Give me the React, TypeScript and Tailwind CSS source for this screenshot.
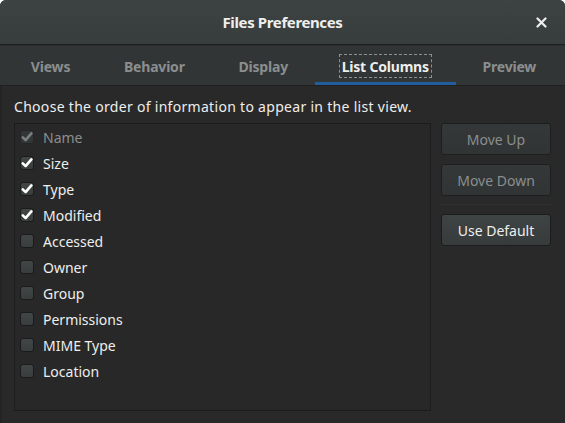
import { useState } from "react";

type Column = {
  name: string;
  checked: boolean;
  locked?: boolean;
};

const tabs = ["Views", "Behavior", "Display", "List Columns", "Preview"];

const initialColumns: Column[] = [
  { name: "Name", checked: true, locked: true },
  { name: "Size", checked: true },
  { name: "Type", checked: true },
  { name: "Modified", checked: true },
  { name: "Accessed", checked: false },
  { name: "Owner", checked: false },
  { name: "Group", checked: false },
  { name: "Permissions", checked: false },
  { name: "MIME Type", checked: false },
  { name: "Location", checked: false },
];

function Check({ checked, locked }: { checked: boolean; locked?: boolean }) {
  return (
    <span
      className={`flex items-center justify-center w-[14px] h-[14px] rounded-[3px] border shrink-0 ${
        locked
          ? "border-[#242626] bg-[#333636]"
          : "border-[#1a1b1b] bg-gradient-to-b from-[#434646] to-[#3a3d3d]"
      }`}
    >
      {checked && (
        <svg width="12" height="12" viewBox="0 0 12 12">
          <path
            d="M1.8 6.4 L4.6 9.2 L10.4 2.4"
            fill="none"
            stroke={locked ? "#7c7f80" : "#ffffff"}
            strokeWidth="2.6"
            strokeLinecap="round"
            strokeLinejoin="round"
          />
        </svg>
      )}
    </span>
  );
}

export default function App() {
  const [columns, setColumns] = useState(initialColumns);
  const active = "List Columns";

  function toggle(index: number) {
    setColumns((cols) =>
      cols.map((c, i) => (i === index && !c.locked ? { ...c, checked: !c.checked } : c))
    );
  }

  return (
    <div
      className="w-[565px] h-[423px] flex flex-col bg-[#292929] text-[#eeeeec] overflow-hidden rounded-t-[6px]"
      style={{ fontFamily: '"Noto Sans", "Open Sans", sans-serif' }}
    >
      {/* header bar */}
      <div className="relative h-[45px] flex items-center justify-center bg-gradient-to-b from-[#3d4343] to-[#373c3c] border-b border-[#1b1f1f] shrink-0">
        <h1 className="text-[15px] font-bold tracking-tight">Files Preferences</h1>
        <button className="absolute right-[14px] top-[12px] w-[20px] h-[20px] flex items-center justify-center">
          <svg width="11" height="11" viewBox="0 0 11 11">
            <path d="M1.5 1.5 L9.5 9.5 M9.5 1.5 L1.5 9.5" stroke="#eeeeec" strokeWidth="2.2" strokeLinecap="round" />
          </svg>
        </button>
      </div>

      {/* tabs */}
      <div className="h-[41px] flex items-stretch pl-[4px] pr-[2px] bg-[#313535] border-t border-[#2b2f2f] border-b border-b-[#1f2121] shrink-0">
        {tabs.map((tab) => (
          <div
            key={tab}
            className={`flex-auto flex items-center justify-center pt-[3px] border-b-[3px] ${
              tab === active ? "border-[#215d9c]" : "border-transparent"
            }`}
          >
            <span
              className={`text-[14px] font-bold px-[2px] pt-[1px] tracking-[-0.2px] ${
                tab === active
                  ? "text-[#eeeeec] border border-dashed border-[#8d9192]"
                  : "text-[#8b8e8f] border border-transparent"
              }`}
            >
              {tab}
            </span>
          </div>
        ))}
      </div>

      {/* content */}
      <div className="flex-1 flex flex-col px-[14px] pt-[11px] pb-[12px] border-l-[2px] border-[#242424]">
        <p className="text-[14px] leading-[20px] mb-[6px] -ml-[2px] tracking-[0.3px]">
          Choose the order of information to appear in the list view.
        </p>
        <div className="flex-1 flex gap-[10px] -ml-[2px]">
          <div className="flex-1 bg-[#282828] border border-[#1c1c1c]">
            {columns.map((col, i) => (
              <div
                key={col.name}
                onClick={() => toggle(i)}
                className="h-[26px] flex items-center gap-[9px] pl-[5px] cursor-default"
              >
                <Check checked={col.checked} locked={col.locked} />
                <span className={`text-[14px] ${col.locked ? "text-[#8b8e8f]" : "text-[#eeeeec]"}`}>
                  {col.name}
                </span>
              </div>
            ))}
          </div>
          <div className="w-[110px] flex flex-col">
            <button className="h-[32px] rounded-[3px] border border-[#1d1f1f] bg-gradient-to-b from-[#343838] to-[#303434] text-[14px] text-[#8b8e8f]">
              Move Up
            </button>
            <button className="mt-[9px] h-[32px] rounded-[3px] border border-[#1d1f1f] bg-gradient-to-b from-[#343838] to-[#303434] text-[14px] text-[#8b8e8f]">
              Move Down
            </button>
            <div className="mt-[8px] mb-[9px] h-px bg-[#303030]" />
            <button className="h-[32px] rounded-[3px] border border-[#1b1d1d] bg-gradient-to-b from-[#3e4343] to-[#373b3b] text-[14px] text-[#eeeeec]">
              Use Default
            </button>
          </div>
        </div>
      </div>
    </div>
  );
}
